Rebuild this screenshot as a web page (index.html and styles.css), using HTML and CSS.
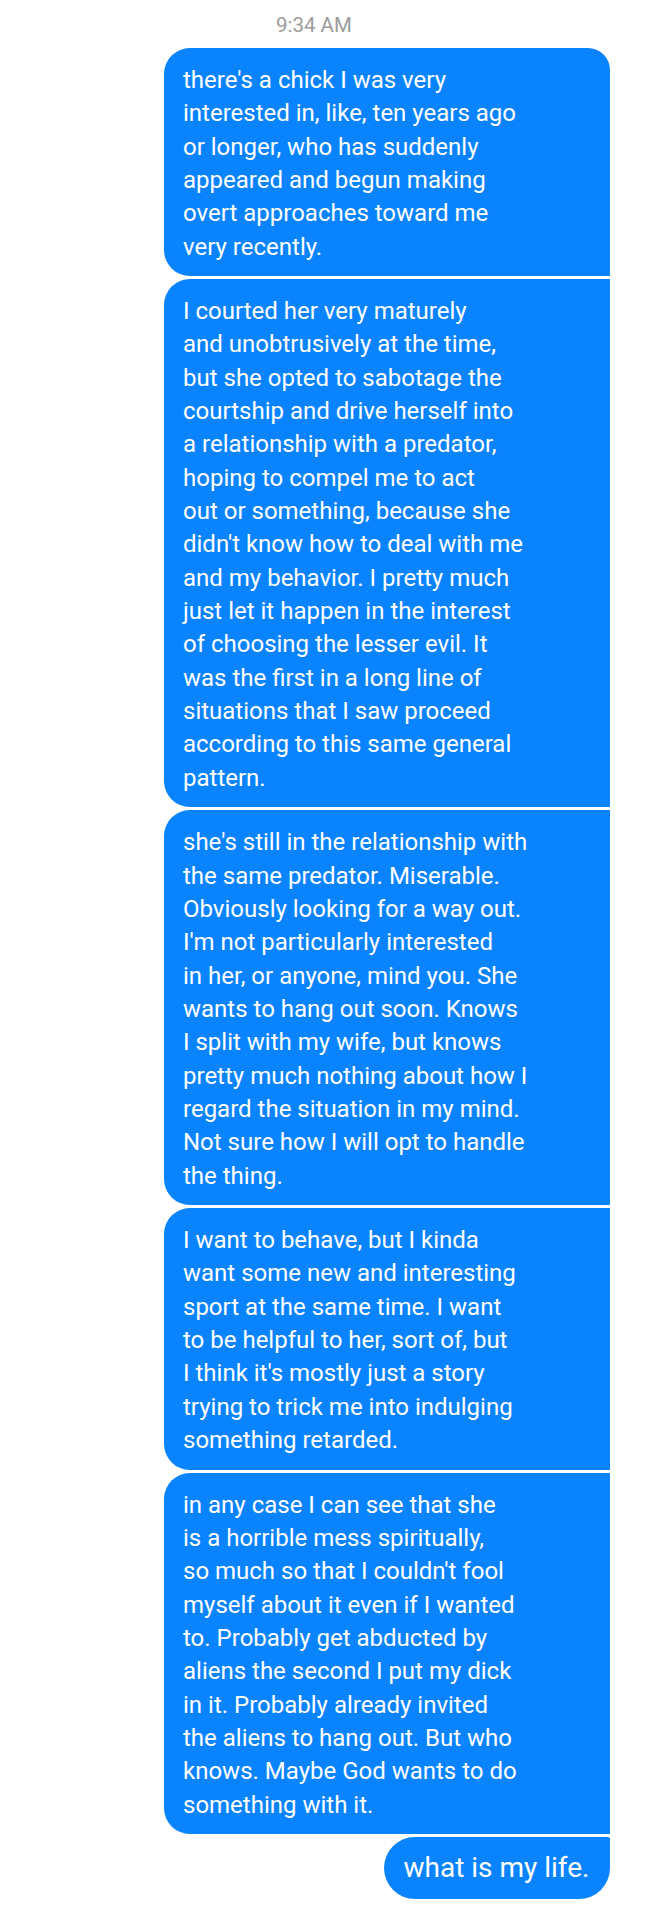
FILE: index.html
```html
<!DOCTYPE html>
<html>
<head>
<meta charset="utf-8">
<link rel="stylesheet" href="styles.css">
</head>
<body>
<div class="thread">
  <div class="stamp">9:34 AM</div>
  <div class="msgs">
    <div class="bubble first">there's a chick I was very<br>interested in, like, ten years ago<br>or longer, who has suddenly<br>appeared and begun making<br>overt approaches toward me<br>very recently.</div>
    <div class="bubble mid">I courted her very maturely<br>and unobtrusively at the time,<br>but she opted to sabotage the<br>courtship and drive herself into<br>a relationship with a predator,<br>hoping to compel me to act<br>out or something, because she<br>didn't know how to deal with me<br>and my behavior. I pretty much<br>just let it happen in the interest<br>of choosing the lesser evil. It<br>was the first in a long line of<br>situations that I saw proceed<br>according to this same general<br>pattern.</div>
    <div class="bubble mid">she's still in the relationship with<br>the same predator. Miserable.<br>Obviously looking for a way out.<br>I'm not particularly interested<br>in her, or anyone, mind you. She<br>wants to hang out soon. Knows<br>I split with my wife, but knows<br>pretty much nothing about how I<br>regard the situation in my mind.<br>Not sure how I will opt to handle<br>the thing.</div>
    <div class="bubble mid">I want to behave, but I kinda<br>want some new and interesting<br>sport at the same time. I want<br>to be helpful to her, sort of, but<br>I think it's mostly just a story<br>trying to trick me into indulging<br>something retarded.</div>
    <div class="bubble mid">in any case I can see that she<br>is a horrible mess spiritually,<br>so much so that I couldn't fool<br>myself about it even if I wanted<br>to. Probably get abducted by<br>aliens the second I put my dick<br>in it. Probably already invited<br>the aliens to hang out. But who<br>knows. Maybe God wants to do<br>something with it.</div>
    <div class="bubble last">what is my life.</div>
  </div>
</div>
</body>
</html>
```

FILE: styles.css
```css
html, body {
  margin: 0;
  padding: 0;
  background: #ffffff;
}

.thread {
  width: 648px;
  font-family: Roboto, "Noto Sans", "Liberation Sans", sans-serif;
}

.stamp {
  padding-left: 276px;
  padding-top: 12.5px;
  height: 48px;
  box-sizing: border-box;
  font-size: 20.5px;
  line-height: 24px;
  color: #9b9b9b;
}

.msgs {
  display: flex;
  flex-direction: column;
  align-items: flex-end;
  gap: 2.9px;
  padding-right: 38.5px;
}

.bubble {
  background: #0a84fe;
  color: #ffffff;
  font-size: 24px;
  line-height: 33.33px;
  padding: 16px 19px 12.3px 19px;
  white-space: nowrap;
  box-sizing: border-box;
  width: 445.5px;
}

.first {
  border-radius: 26px 22px 0 26px;
}

.mid {
  border-radius: 26px 0 0 26px;
}

.last {
  width: auto;
  font-size: 28px;
  line-height: 36px;
  padding: 13px 20px 13px 19px;
  border-radius: 31px 2px 31px 31px;
}
```
